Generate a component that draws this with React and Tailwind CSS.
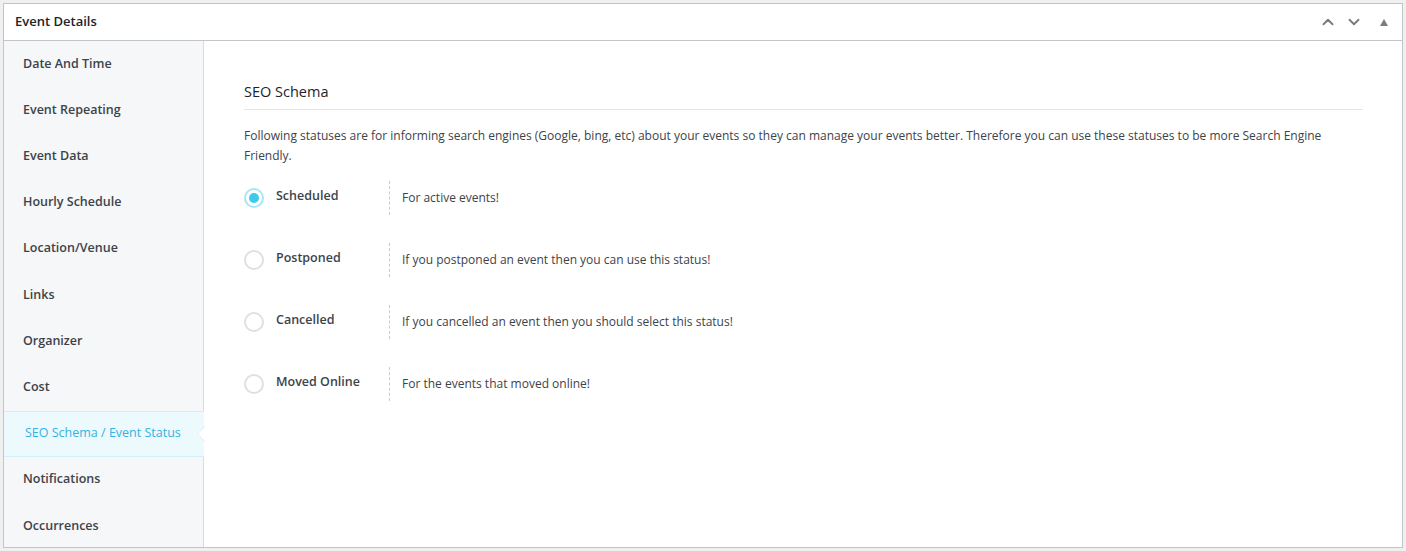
import { ChevronUp, ChevronDown } from "lucide-react";

const tabs = [
  "Date And Time",
  "Event Repeating",
  "Event Data",
  "Hourly Schedule",
  "Location/Venue",
  "Links",
  "Organizer",
  "Cost",
  "SEO Schema / Event Status",
  "Notifications",
  "Occurrences",
];

const statuses = [
  { label: "Scheduled", desc: "For active events!", checked: true },
  { label: "Postponed", desc: "If you postponed an event then you can use this status!" },
  { label: "Cancelled", desc: "If you cancelled an event then you should select this status!" },
  { label: "Moved Online", desc: "For the events that moved online!" },
];

function Radio({ checked }) {
  return checked ? (
    <span className="w-[20px] h-[20px] rounded-full border-2 border-[#a9e5f6] bg-white flex items-center justify-center">
      <span className="w-[10px] h-[10px] rounded-full bg-[#3ccbef]" />
    </span>
  ) : (
    <span className="w-[20px] h-[20px] rounded-full border-2 border-[#e0e0e0] bg-white" />
  );
}

export default function App() {
  return (
    <div
      className="w-[1406px] h-[551px] bg-[#f0f0f1] p-[3px] text-[13px] text-[#3c434a]"
      style={{ fontFamily: '"Open Sans", "Noto Sans", sans-serif' }}
    >
      <div className="h-[545px] bg-white border border-[#c3c4c7] flex flex-col">
        <div className="h-[37px] border-b border-[#c3c4c7] flex items-center justify-between pl-[11px] pr-[14px] shrink-0">
          <span className="font-semibold text-[13px] text-[#1d2327]">Event Details</span>
          <div className="flex items-center text-[#787c82]">
            <ChevronUp className="w-[18px] h-[18px]" strokeWidth={2.5} />
            <ChevronDown className="w-[18px] h-[18px] ml-[8px]" strokeWidth={2.5} />
            <span className="ml-[17px] w-0 h-0 border-l-[4px] border-r-[4px] border-b-[7px] border-l-transparent border-r-transparent border-b-[#787c82]" />
          </div>
        </div>
        <div className="flex flex-1 min-h-0">
          <div className="w-[200px] bg-[#f6f7f8] border-r border-[#dcdcde] shrink-0 text-[12.5px]">
            {tabs.map((t, i) =>
              i === 8 ? (
                <div
                  key={t}
                  className="relative h-[46.2px] flex items-center pl-[21px] bg-[#ecf9fd] border-y border-[#d3eff9] text-[#31b4e4] -mr-px"
                >
                  {t}
                  <span className="absolute right-[-1px] top-[14px] w-0 h-0 border-y-[8px] border-r-[8px] border-y-transparent border-r-[#e3eef2]" />
                  <span className="absolute right-[-1px] top-[15px] w-0 h-0 border-y-[7px] border-r-[7px] border-y-transparent border-r-white" />
                </div>
              ) : (
                <div key={t} className="h-[46.2px] flex items-center pl-[19px] font-semibold text-[#3c434a]">
                  {t}
                </div>
              )
            )}
          </div>
          <div className="flex-1 pl-[40px] pr-[39px] pt-[40px] text-[12px]">
            <h3 className="text-[14.5px] text-[#1d2327] pb-[6px] border-b border-[#e2e4e7]">SEO Schema</h3>
            <p className="mt-[16px] leading-[20px] text-[#3c434a]">
              Following statuses are for informing search engines (Google, bing, etc) about your events so they can manage your events better. Therefore you can use these statuses to be more Search Engine Friendly.
            </p>
            <div className="mt-[15px] flex flex-col gap-[28px]">
              {statuses.map((s) => (
                <div key={s.label} className="flex items-center h-[34px]">
                  <Radio checked={s.checked} />
                  <span className="ml-[12px] w-[113px] font-semibold text-[12.5px] text-[#3c434a] -mt-[3px]">{s.label}</span>
                  <span className="h-[34px] border-l border-dashed border-[#c9c9c9]" />
                  <span className="ml-[12px] text-[#3c434a]">{s.desc}</span>
                </div>
              ))}
            </div>
          </div>
        </div>
      </div>
    </div>
  );
}
